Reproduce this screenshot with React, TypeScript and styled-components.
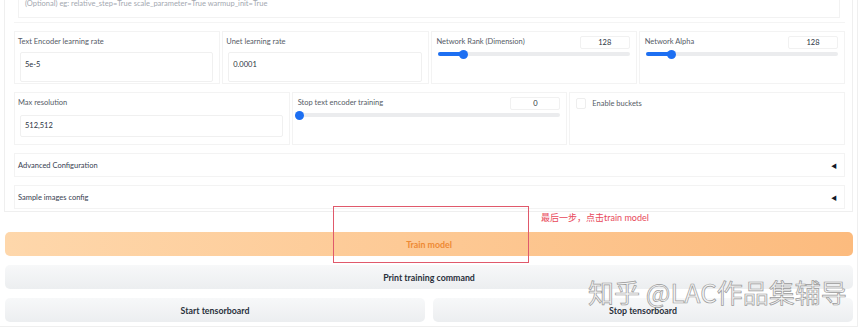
import React from 'react';
import styled, { createGlobalStyle } from 'styled-components';

const GlobalStyle = createGlobalStyle`
  html, body {
    margin: 0;
    padding: 0;
    background: #ffffff;
  }
  body {
    font-family: 'Lato', 'Noto Sans CJK SC', sans-serif;
    font-size: 7.5px;
    color: #374151;
  }
`;

interface SliderProps {
  label: string;
  value: number;
  max: number;
}

const SliderBlock = ({ label, value, max }: SliderProps) => {
  const pct = (value / max) * 100;
  return (
    <Cell>
      <SliderHead>
        <Label>{label}</Label>
        <NumberBox>{value}</NumberBox>
      </SliderHead>
      <Track>
        <Fill style={{ width: `${pct}%` }} />
        <Thumb style={{ left: `${pct}%` }} />
      </Track>
    </Cell>
  );
};

const Accordion = ({ title }: { title: string }) => (
  <AccordionRow>
    <span>{title}</span>
    <Caret>◀</Caret>
  </AccordionRow>
);

const App = () => (
  <>
    <GlobalStyle />
    <Page>
      <Panel>
        <TopBlock>
          <Placeholder>
            (Optional) eg: relative_step=True scale_parameter=True warmup_init=True
          </Placeholder>
        </TopBlock>

        <Row $cols={4}>
          <Cell>
            <Label>Text Encoder learning rate</Label>
            <TextBox $tall>5e-5</TextBox>
          </Cell>
          <Cell>
            <Label>Unet learning rate</Label>
            <TextBox $tall>0.0001</TextBox>
          </Cell>
          <SliderBlock label="Network Rank (Dimension)" value={128} max={960} />
          <SliderBlock label="Network Alpha" value={128} max={960} />
        </Row>

        <Row $cols={3}>
          <Cell>
            <Label>Max resolution</Label>
            <TextBox>512,512</TextBox>
          </Cell>
          <SliderBlock label="Stop text encoder training" value={0} max={100} />
          <Cell>
            <CheckLine>
              <CheckBox />
              <Label>Enable buckets</Label>
            </CheckLine>
          </Cell>
        </Row>

        <Accordion title="Advanced Configuration" />
        <Accordion title="Sample images config" />
      </Panel>

      <Actions>
        <Button $primary>Train model</Button>
        <Button>Print training command</Button>
        <ButtonPair>
          <Button>Start tensorboard</Button>
          <Button>Stop tensorboard</Button>
        </ButtonPair>
      </Actions>

      <Highlight />
      <Note>最后一步，点击train model</Note>
      <Watermark>知乎 @LAC作品集辅导</Watermark>
    </Page>
  </>
);

export default App;

const Page = styled.div`
  position: relative;
  width: 857px;
  height: 326px;
  border-right: 1px solid #efefef;
  border-bottom: 1px solid #efefef;
  overflow: hidden;
`;

const Panel = styled.div`
  margin-left: 4px;
  width: 849px;
  box-sizing: border-box;
  display: flex;
  flex-direction: column;
  gap: 8px;
  padding: 0 7px 2px 9px;
  border: 1px solid #efefef;
  border-top: none;
`;

const TopBlock = styled.div`
  height: 23px;
  box-sizing: border-box;
  border-bottom: 1px solid #f4f4f4;
  padding: 0 5px 0 4px;
`;

const Placeholder = styled.div`
  height: 18px;
  box-sizing: border-box;
  border: 1px solid #f2f2f2;
  border-top: none;
  padding: 0 0 0 6px;
  color: #a3a8b0;
  line-height: 8px;
`;

const Row = styled.div<{ $cols: number }>`
  display: grid;
  grid-template-columns: repeat(${(p) => p.$cols}, 1fr);
  gap: 2px;
  height: 53px;
`;

const Cell = styled.div`
  border: 1px solid #f3f3f3;
  background: #ffffff;
  padding: 5px 6px 0 3px;
  box-sizing: border-box;
  display: flex;
  flex-direction: column;
`;

const Label = styled.div`
  color: #555b66;
  line-height: 10px;
  white-space: nowrap;
`;

const TextBox = styled.div<{ $tall?: boolean }>`
  margin: ${(p) => (p.$tall ? '5px' : '7px')} 0 0 2px;
  height: ${(p) => (p.$tall ? '30px' : '22px')};
  box-sizing: border-box;
  border: 1px solid #f0f0f0;
  border-radius: 2px;
  padding: ${(p) => (p.$tall ? '7px 4px 0' : '0 4px')};
  display: flex;
  align-items: ${(p) => (p.$tall ? 'flex-start' : 'center')};
  color: #2b3340;
  line-height: 10px;
`;

const SliderHead = styled.div`
  display: flex;
  justify-content: space-between;
  align-items: center;
  height: 10px;
  padding-left: 2px;
`;

const NumberBox = styled.div`
  width: 50px;
  height: 13px;
  box-sizing: border-box;
  border: 1px solid #f1f1f1;
  border-radius: 2px;
  display: flex;
  align-items: center;
  justify-content: center;
  color: #2b3340;
`;

const Track = styled.div`
  position: relative;
  margin: 5px 0 0 3px;
  height: 4px;
  border-radius: 2px;
  background: #ebecee;
`;

const Fill = styled.div`
  height: 100%;
  border-radius: 2px;
  background: #1d6ff2;
`;

const Thumb = styled.div`
  position: absolute;
  top: 50%;
  width: 9px;
  height: 9px;
  margin: -4.5px 0 0 -4px;
  border-radius: 50%;
  background: #1d6ff2;
`;

const CheckLine = styled.div`
  display: flex;
  align-items: center;
  gap: 6px;
  padding-left: 3px;
`;

const CheckBox = styled.div`
  width: 8px;
  height: 9px;
  border: 1px solid #eeeeee;
  border-radius: 2px;
`;

const AccordionRow = styled.div`
  height: 24px;
  box-sizing: border-box;
  border: 1px solid #f3f3f3;
  padding: 0 7px 0 3px;
  display: flex;
  align-items: center;
  justify-content: space-between;
  color: #374151;
`;

const Caret = styled.span`
  font-size: 6px;
  color: #111827;
`;

const Actions = styled.div`
  margin: 20px 0 0 5px;
  width: 848px;
  display: flex;
  flex-direction: column;
  gap: 9px;
`;

const Button = styled.div<{ $primary?: boolean }>`
  height: 24px;
  border-radius: 5px;
  display: flex;
  align-items: center;
  justify-content: center;
  font-weight: 700;
  font-size: 8.8px;
  color: ${(p) => (p.$primary ? '#ee8a34' : '#2a313c')};
  background: ${(p) =>
    p.$primary
      ? 'linear-gradient(to right, #fed7ab, #fcbb7e)'
      : 'linear-gradient(to bottom, #f7f8f9, #eceef0)'};
`;

const ButtonPair = styled.div`
  display: flex;
  gap: 8px;
  > * {
    flex: 1;
  }
`;

const Highlight = styled.div`
  position: absolute;
  left: 333px;
  top: 206px;
  width: 196px;
  height: 57px;
  box-sizing: border-box;
  border: 1px solid #e0596b;
`;

const Note = styled.div`
  position: absolute;
  left: 541px;
  top: 211px;
  font-size: 9px;
  color: #e8485a;
  white-space: nowrap;
`;

const Watermark = styled.div`
  position: absolute;
  left: 588px;
  top: 273px;
  font-family: 'Noto Sans CJK SC', sans-serif;
  font-size: 26px;
  font-weight: 400;
  color: rgba(244, 244, 244, 0.9);
  -webkit-text-stroke: 0.7px #9a9a9a;
  white-space: nowrap;
`;
